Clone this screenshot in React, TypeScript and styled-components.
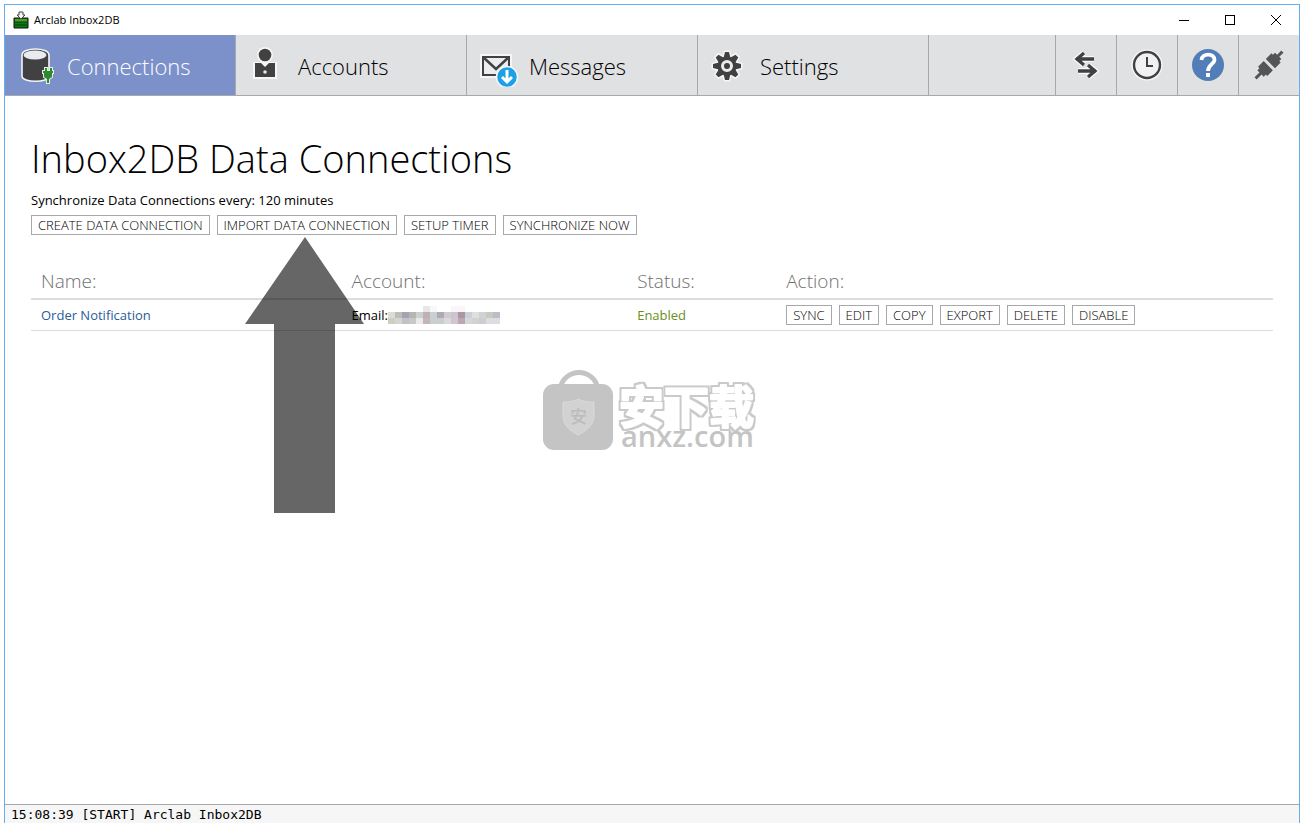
import React from "react";
import styled, { createGlobalStyle } from "styled-components";

const GlobalStyle = createGlobalStyle`
  * { box-sizing: border-box; }
  html { background: #fff; }
  body {
    margin: 0;
    color: #000;
    font-family: "Segoe UI", "Open Sans", sans-serif;
    font-size: 13px;
    line-height: 20px;
  }
`;

const AppWindow = styled.div`
  position: relative;
  display: flex;
  flex-direction: column;
  min-height: calc(100vh - 4px);
  margin: 4px 2px 0 4px;
  border: 1px solid #64aef0;
  border-bottom: 0;
`;

const TitleBar = styled.header`
  display: flex;
  align-items: center;
  height: 30px;
  padding-left: 8px;
  font-size: 11px;
`;

const Title = styled.span`
  flex: 1;
  margin-left: 5px;
`;

const WindowButton = styled.button`
  display: flex;
  align-items: center;
  justify-content: center;
  width: 46px;
  height: 30px;
  padding: 0;
  border: 0;
  background: none;
`;

const Toolbar = styled.nav`
  display: flex;
  height: 61px;
  border-bottom: 1px solid #a7a8aa;
  background: #e0e1e3;
`;

const Tab = styled.button<{ $active?: boolean }>`
  display: flex;
  align-items: center;
  width: 231px;
  padding: 0 0 0 10px;
  border: 0;
  border-right: 1px solid #a7a8aa;
  background: ${(p) => (p.$active ? "#7c91c9" : "transparent")};
  color: ${(p) => (p.$active ? "#fff" : "#000")};
  font: 300 22px/30px "Segoe UI Light", "Open Sans", sans-serif;
  text-align: left;
`;

const TabIcon = styled.svg`
  flex: none;
  width: 44px;
  height: 44px;
  margin-right: 8px;
`;

const TabLabel = styled.span`
  padding-top: 2px;
`;

const Spacer = styled.div`
  flex: 1;
`;

const ToolButton = styled.button`
  display: flex;
  align-items: center;
  justify-content: center;
  width: 61px;
  padding: 0;
  border: 0;
  border-left: 1px solid #a7a8aa;
  background: none;
`;

const Content = styled.main`
  flex: 1;
  padding: 34px 26px;
`;

const Heading = styled.h1`
  margin: 0;
  font: 300 38px/56px "Segoe UI Light", "Open Sans", sans-serif;
`;

const Subtitle = styled.p`
  margin: 4px 0 5px;
`;

const ButtonRow = styled.div`
  display: flex;
  gap: 7px;
`;

const ActionButton = styled.button`
  height: 20px;
  padding: 0 6px;
  border: 1px solid #a7a8aa;
  background: #fff;
  color: #000;
  font: 350 13px/18px "Segoe UI", "Open Sans", sans-serif;
  text-transform: uppercase;
  white-space: nowrap;
`;

const Table = styled.table`
  width: 100%;
  margin-top: 28px;
  border-collapse: separate;
  border-spacing: 0;
  table-layout: fixed;
`;

const HeadCell = styled.th<{ $width: string }>`
  width: ${(p) => p.$width};
  height: 37px;
  padding: 0 0 0 10px;
  border-bottom: 2px solid #dcdcdc;
  color: #707070;
  font-size: 19px;
  font-weight: 300;
  line-height: 26px;
  text-align: left;
`;

const Cell = styled.td`
  height: 31px;
  padding: 0 0 0 10px;
  border-bottom: 1px solid #dcdcdc;
`;

const NameLink = styled.a`
  color: #2a5c9a;
  text-decoration: none;
`;

const Enabled = styled.span`
  color: #6b8e23;
`;

const Account = styled.div`
  display: flex;
  align-items: center;
`;

const StatusBar = styled.footer`
  height: 19px;
  padding: 2px 6px 0;
  border-top: 1px solid #a7a8aa;
  background: #f6f6f6;
  font: 13px/16px Consolas, "DejaVu Sans Mono", monospace;
  white-space: nowrap;
`;

const Pointer = styled.svg`
  position: absolute;
  top: 231px;
  left: 240px;
  pointer-events: none;
`;

const Watermark = styled.svg`
  position: absolute;
  top: 365px;
  left: 50%;
  margin-left: -112px;
  pointer-events: none;
`;

/* Rows of the hidden address; each entry is one 7px block. */
const mosaic = [
  ["", "", "", "", "", "#e9e6e8", "#f8f7f9", "", "", "#faf5f8", "#faf6f8", "", "", "", "", ""],
  ["#dcddd2", "#bcbdb8", "#a5a3b0", "#b5b5b4", "#cbd0d0", "#bfb1b3", "#c9cfd2", "#b0a8b5", "#cfccd0", "#cdc4cf", "#ab97a0", "#cacfda", "#dde0dc", "#d2d2d4", "#c6cac5", "#bbbec6"],
  ["#cdcebf", "#d3d5cf", "#c4bfc8", "#c9c8c4", "#eceae6", "#c3b6b6", "#c7cfd1", "#c9ced0", "#dcdad8", "#d1c5d1", "#bba9b2", "#d6d6dd", "#cfd3d1", "#d0cdd0", "#dcdde0", "#dcdde3"],
];

const HiddenAddress = () => (
  <svg width="112" height="18" role="img" aria-label="hidden address" shapeRendering="crispEdges">
    {mosaic.map((row, y) =>
      row.map((c, x) => c && <rect key={`${x}-${y}`} x={x * 7} y={y * 6} width="7" height="6" fill={c} />)
    )}
  </svg>
);

const AppIcon = () => (
  <svg width="16" height="18" viewBox="0 0 16 18">
    <path d="M1 7h14v10H1z" fill="#0b7a10" stroke="#111" />
    <path d="M2 8h12v3H2z" fill="#4f9d2c" />
    <path d="M2 11h12M2 14h12" stroke="#0a3f08" />
    <path d="M6 1h4v3h2L8 8 4 4h2z" fill="#f4f4f4" stroke="#444" />
  </svg>
);

const DatabaseIcon = () => (
  <TabIcon viewBox="0 0 44 44">
    <path d="M7 12c0-8 27-8 27 0v21c0 7-27 7-27 0z" fill="#414141" stroke="#f4f5f8" strokeWidth="1.600" />
    <ellipse cx="20" cy="12" rx="11.500" ry="4.500" fill="#e9ebf0" />
    <path d="M30 25h2v3h3v-3h2v3h1v2h-1v4l-3 2v4h-2v-4l-3-2v-4h-1v-2h2z" fill="#2f8a2f" stroke="#e6eee8" strokeWidth="2" paintOrder="stroke" />
  </TabIcon>
);

const AccountIcon = () => (
  <TabIcon viewBox="0 0 44 44">
    <g stroke="#f6f6f6" strokeWidth="4" fill="#f6f6f6">
      <circle cx="19" cy="12" r="6" />
      <path d="M9 21h20v13H9z" />
    </g>
    <circle cx="19" cy="12" r="6.300" fill="#414141" />
    <path d="M9 20h6l4 4 4-4h6v14H9z" fill="#414141" />
    <circle cx="19" cy="29" r="1.800" fill="#e8e8e8" />
  </TabIcon>
);

const MessageIcon = () => (
  <TabIcon viewBox="0 0 44 44">
    <path d="M3 11h32v24H3z" fill="#f5f5f7" />
    <path d="M6 14h26v18H6z" fill="#ededf1" stroke="#414141" strokeWidth="2" />
    <path d="M6 14l13 12 13-12" fill="none" stroke="#414141" strokeWidth="2.400" />
    <circle cx="30" cy="34" r="10.500" fill="#1ea0e4" stroke="#f4f8fb" strokeWidth="1.500" />
    <path d="M30 27v11M25 34l5 5 5-5" fill="none" stroke="#fff" strokeWidth="3" />
  </TabIcon>
);

const gearTeeth = [0, 45, 90, 135, 180, 225, 270, 315];

const GearShape = () => (
  <>
    <circle cx="19" cy="23" r="9.500" />
    {gearTeeth.map((a) => (
      <path key={a} d="M15.500 15l1.500-6h4l1.500 6z" transform={`rotate(${a} 19 23)`} />
    ))}
  </>
);

const GearIcon = () => (
  <TabIcon viewBox="0 0 44 44">
    <g fill="#f6f6f6" stroke="#f6f6f6" strokeWidth="3">
      <GearShape />
    </g>
    <g fill="#414141">
      <GearShape />
    </g>
    <circle cx="19" cy="23" r="4.500" fill="#414141" stroke="#ececee" strokeWidth="3" />
    <circle cx="19" cy="23" r="2.200" fill="#414141" />
  </TabIcon>
);

const SwapPaths = () => (
  <>
    <path d="M4 9h18M12 3L5 9l7 6" />
    <path d="M6 21h18M16 15l7 6-7 6" />
  </>
);

const SwapIcon = () => (
  <svg width="28" height="30" viewBox="0 0 28 30" fill="none">
    <g stroke="#f8f8f8" strokeWidth="6">
      <SwapPaths />
    </g>
    <g stroke="#414141" strokeWidth="3.300">
      <SwapPaths />
    </g>
  </svg>
);

const ClockIcon = () => (
  <svg width="32" height="32" viewBox="0 0 32 32" fill="none">
    <circle cx="16" cy="16" r="14" fill="#f1f1f3" stroke="#f8f8f8" strokeWidth="3" />
    <circle cx="16" cy="16" r="13" stroke="#414141" strokeWidth="2.400" />
    <path d="M16 8v9h6" stroke="#414141" strokeWidth="2" />
  </svg>
);

const HelpIcon = () => (
  <svg width="32" height="32" viewBox="0 0 32 32" fill="none">
    <circle cx="16" cy="16" r="16" fill="#527db8" />
    <path d="M9.500 11C10 3.500 23 4 22.500 11c-.3 4-6.500 5-6.500 11" stroke="#fff" strokeWidth="3.800" />
    <path d="M14 24h4v4h-4z" fill="#fff" />
  </svg>
);

const PlugIcon = () => (
  <svg width="30" height="30" viewBox="0 0 30 30">
    <g transform="rotate(45 15 15)" fill="#555">
      <path d="M13.500-4h3v6h3v3h2v8h-13V5h2V2h3z" />
      <path d="M8.500 16h13v8h-2v3h-3v7h-3v-7h-3v-3h-2z" />
    </g>
  </svg>
);

const AnxzMark = () => (
  <Watermark width="220" height="90" viewBox="0 0 220 90" aria-hidden="true">
    <defs>
      <filter id="outline" x="-10%" y="-10%" width="120%" height="120%">
        <feMorphology in="SourceAlpha" operator="dilate" radius="2" result="grown" />
        <feFlood floodColor="#cacaca" />
        <feComposite in2="grown" operator="in" result="edge" />
        <feMerge>
          <feMergeNode in="edge" />
          <feMergeNode in="SourceGraphic" />
        </feMerge>
      </filter>
    </defs>
    <path d="M20 19C24-3 54-3 58 19" fill="none" stroke="#c4c4c4" strokeWidth="5" />
    <rect x="3" y="14" width="70" height="66" rx="11" fill="#c4c4c4" />
    <path d="M23 32c7 0 11-1 15-3 4 2 9 3 16 3v14c0 9-8 15-16 19-8-4-15-10-15-19z" fill="#d2d2d2" stroke="#dadada" />
    <text x="30" y="53" fontSize="17" fontWeight="500" fill="#bcbcbc" fontFamily='"Noto Sans CJK SC", sans-serif'>安</text>
    <text x="79" y="54" fontSize="45" fontWeight="700" fill="#fff" stroke="#fff" strokeWidth="2" strokeLinejoin="round" filter="url(#outline)" fontFamily='"Noto Sans CJK SC", sans-serif'>安下载</text>
    <text x="81" y="77" fontSize="29" fontWeight="600" fill="#c4c4c4" fontFamily='"Open Sans", sans-serif'>anxz.com</text>
  </Watermark>
);

const tabs = [
  { label: "Connections", Icon: DatabaseIcon, active: true },
  { label: "Accounts", Icon: AccountIcon },
  { label: "Messages", Icon: MessageIcon },
  { label: "Settings", Icon: GearIcon },
];

const tools = [
  { label: "Transfer", Icon: SwapIcon },
  { label: "Timer", Icon: ClockIcon },
  { label: "Help", Icon: HelpIcon },
  { label: "Connect", Icon: PlugIcon },
];

const columns = [
  { label: "Name:", width: "25%" },
  { label: "Account:", width: "23%" },
  { label: "Status:", width: "12%" },
  { label: "Action:", width: "40%" },
];

const pageActions = ["Create Data Connection", "Import Data Connection", "Setup Timer", "Synchronize Now"];
const rowActions = ["Sync", "Edit", "Copy", "Export", "Delete", "Disable"];

export default function App() {
  return (
    <>
      <GlobalStyle />
      <AppWindow>
        <TitleBar>
          <AppIcon />
          <Title>Arclab Inbox2DB</Title>
          <WindowButton aria-label="Minimize">
            <svg width="10" height="10" shapeRendering="crispEdges"><path d="M0 5h10v1H0z" /></svg>
          </WindowButton>
          <WindowButton aria-label="Maximize">
            <svg width="10" height="10" shapeRendering="crispEdges"><path d="M0 0h10v10H0zM1 1v8h8V1z" fillRule="evenodd" /></svg>
          </WindowButton>
          <WindowButton aria-label="Close">
            <svg width="10" height="10"><path d="M0 0l10 10M10 0L0 10" stroke="#000" /></svg>
          </WindowButton>
        </TitleBar>
        <Toolbar>
          {tabs.map(({ label, Icon, active }) => (
            <Tab key={label} $active={active}>
              <Icon />
              <TabLabel>{label}</TabLabel>
            </Tab>
          ))}
          <Spacer />
          {tools.map(({ label, Icon }) => (
            <ToolButton key={label} aria-label={label}>
              <Icon />
            </ToolButton>
          ))}
        </Toolbar>
        <Content>
          <Heading>Inbox2DB Data Connections</Heading>
          <Subtitle>Synchronize Data Connections every: 120 minutes</Subtitle>
          <ButtonRow>
            {pageActions.map((a) => (
              <ActionButton key={a}>{a}</ActionButton>
            ))}
          </ButtonRow>
          <Table>
            <thead>
              <tr>
                {columns.map((c) => (
                  <HeadCell key={c.label} $width={c.width}>{c.label}</HeadCell>
                ))}
              </tr>
            </thead>
            <tbody>
              <tr>
                <Cell><NameLink href="#order-notification">Order Notification</NameLink></Cell>
                <Cell><Account>Email:<HiddenAddress /></Account></Cell>
                <Cell><Enabled>Enabled</Enabled></Cell>
                <Cell>
                  <ButtonRow>
                    {rowActions.map((a) => (
                      <ActionButton key={a}>{a}</ActionButton>
                    ))}
                  </ButtonRow>
                </Cell>
              </tr>
            </tbody>
          </Table>
        </Content>
        <StatusBar>15:08:39 [START] Arclab Inbox2DB</StatusBar>
        <Pointer width="120" height="278" viewBox="0 0 120 278" aria-hidden="true">
          <path d="M60 1l59 87H90v189H29V88H0z" fill="#000" fillOpacity=".6" />
        </Pointer>
        <AnxzMark />
      </AppWindow>
    </>
  );
}
